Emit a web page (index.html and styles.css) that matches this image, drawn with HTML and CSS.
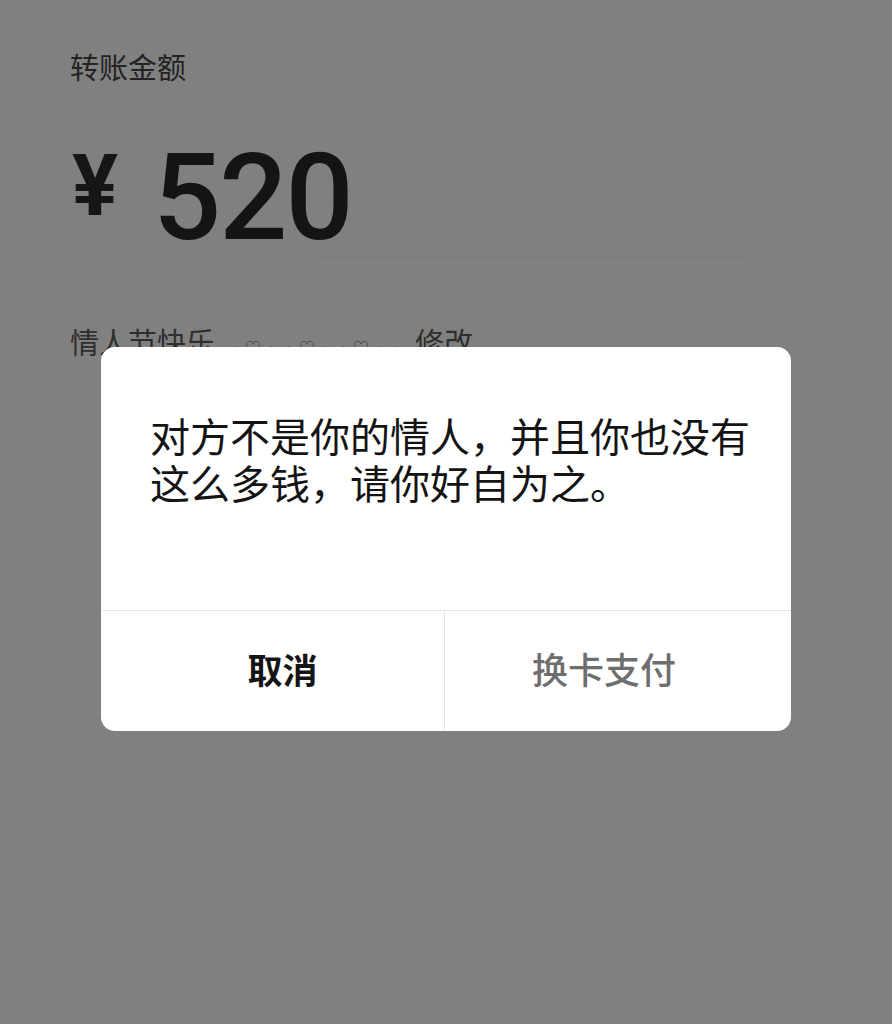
FILE: index.html
```html
<!DOCTYPE html>
<html lang="zh">
<head>
<meta charset="utf-8">
<link rel="stylesheet" href="styles.css">
</head>
<body>
<div class="page">
  <div class="label">转账金额</div>
  <div class="amount">
    <span class="yen">¥</span>
    <span class="num">520</span>
  </div>
  <div class="rule"></div>
  <div class="note">情人节快乐<span class="emo">·♡··♡··♡··</span>修改</div>
</div>
<div class="dialog">
  <div class="msg">
    <div class="line">对方不是你的情人，并且你也没有</div>
    <div class="line">这么多钱，请你好自为之。</div>
  </div>
  <div class="actions">
    <div class="btn cancel">取消</div>
    <div class="btn alt">换卡支付</div>
  </div>
</div>
</body>
</html>
```
FILE: styles.css
```css
html, body {
  margin: 0;
  padding: 0;
}
body {
  background: #808080;
  width: 892px;
  height: 1024px;
  overflow: hidden;
  font-family: "Noto Sans CJK SC", "Noto Sans", sans-serif;
  position: relative;
}
.page {
  padding: 46px 0 0 70px;
  color: #1e1e1e;
}
.label {
  font-size: 29px;
  line-height: 40px;
  color: #232323;
}
.amount {
  display: flex;
  align-items: flex-start;
  margin-top: 54px;
  height: 110px;
}
.yen {
  font-family: Roboto, "Liberation Sans", sans-serif;
  font-weight: 700;
  font-size: 86px;
  line-height: 1;
  margin-top: 3px;
  margin-left: 2px;
  color: #161616;
}
.num {
  font-family: Roboto, "Liberation Sans", sans-serif;
  font-weight: 500;
  font-size: 120px;
  line-height: 1;
  margin-left: 35px;
  margin-top: -2px;
  color: #141414;
  letter-spacing: -2px;
}
.rule {
  height: 1px;
  background: #888888;
  margin: 12px 150px 0 250px;
}
.note {
  margin-top: 58px;
  font-size: 29px;
  line-height: 40px;
  color: #2e2e2e;
}
.emo {
  font-size: 16px;
  margin: 0 8px 0 12px;
  letter-spacing: 2px;
  color: #3a3a3a;
}
.dialog {
  position: absolute;
  left: 101px;
  top: 347px;
  width: 690px;
  height: 384px;
  background: #ffffff;
  border-radius: 14px;
  display: flex;
  flex-direction: column;
  overflow: hidden;
}
.msg {
  flex: 1;
  padding: 65px 40px 0 49px;
  font-size: 40px;
  color: #141414;
}
.line {
  height: 47px;
  line-height: 47px;
  white-space: nowrap;
}
.actions {
  height: 120px;
  display: flex;
  border-top: 1px solid #e6e6e6;
}
.btn {
  flex: 1;
  display: flex;
  align-items: center;
  justify-content: center;
  font-size: 35px;
  padding-bottom: 6px;
  box-sizing: border-box;
}
.cancel {
  font-weight: 700;
  color: #151515;
  border-right: 1px solid #e6e6e6;
  flex: 0 0 344px;
  padding-left: 20px;
}
.alt {
  color: #6e6e6e;
  font-size: 36px;
  font-weight: 500;
  padding-right: 28px;
}
```
